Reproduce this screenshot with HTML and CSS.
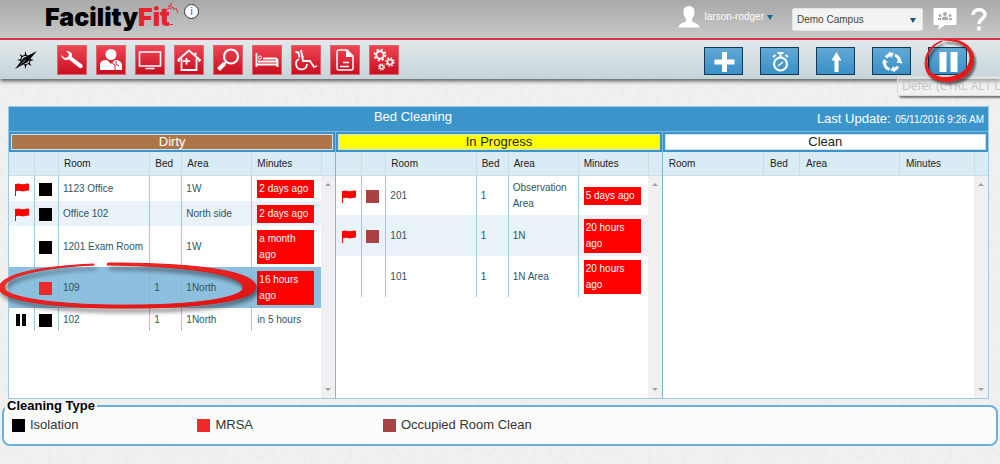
FILE: index.html
```html
<!DOCTYPE html>
<html lang="en">
<head>
<meta charset="utf-8">
<title>FacilityFit - Bed Cleaning</title>
<link rel="stylesheet" href="styles.css">
</head>
<body>
<svg class="sprite" aria-hidden="true">
  <defs>
    <linearGradient id="inkred" x1="0" y1="0" x2="1" y2="1"><stop offset="0" stop-color="#f2352f"/><stop offset="1" stop-color="#e00f10"/></linearGradient>
    <symbol id="flag" viewBox="0 0 14 13"><path d="M0.500 1v12M1 1.500c3-1.500 5 1 8 0.200 2-.5 3-.9 4.500-.7v6.200c-2-.4-3 .6-5 .7-3 .1-4-1.500-7.500-.3z" fill="#f00" stroke="#f00"/></symbol>
  </defs>
</svg>
<header class="topbar">
  <div class="brand">
    <a class="logo" href="#"><span>Facility</span><span class="logo-fit">Fit</span></a>
    <svg class="spark" viewBox="0 0 12 26"><path d="M0 9l3-1-2-2 4 0-2-2 2-1M3 9l3-2 1 3 2-2 2 5" fill="none" stroke="#e23240" stroke-width="1"/><path d="M3 24.500h3" stroke="#e23240"/></svg>
    <button class="info" aria-label="Information">i</button>
  </div>
  <div class="account">
    <svg class="avatar" viewBox="0 0 22 22"><path d="M11 0c4 0 6 3 5.500 7-.3 3-1.500 4.500-2.500 6v2c1 2 7 2 7.500 6.500H.5C1 17 7 17 8 15v-2c-1-1.500-2.200-3-2.500-6C5 3 7 0 11 0z" fill="#fff"/></svg>
    <button class="user">larson-rodger <svg viewBox="0 0 6 5"><path d="M0 0h6L3 5z" fill="#17698a"/></svg></button>
    <div class="campus">
      <select aria-label="Campus"><option>Demo Campus</option></select>
      <svg viewBox="0 0 6 5"><path d="M0 0h6L3 5z" fill="#17587a"/></svg>
    </div>
    <button class="plain" aria-label="Chat"><svg width="24" height="22" viewBox="0 0 24 22"><path d="M1.500 0h21a1 1 0 0 1 1 1v15a1 1 0 0 1-1 1H12l-7 5 1-5H1.500a1 1 0 0 1-1-1V1a1 1 0 0 1 1-1z" fill="#fff"/><g fill="#aaa"><circle cx="12" cy="6" r="2"/><circle cx="7" cy="7.500" r="1.500"/><circle cx="17" cy="7.500" r="1.500"/><path d="M9 12V9.500q3-2 6 0V12zM5 12v-2h3v2zM16 12v-2h3v2z"/></g></svg></button>
    <button class="plain help" aria-label="Help"><svg width="16" height="23" viewBox="0 0 16 23"><path d="M2 7c0-7 12-7 12-.5C14 11 8 11 8 16M8 18.500v4" fill="none" stroke="#fff" stroke-width="3.500"/></svg></button>
  </div>
</header>

<nav class="toolbar" aria-label="Tools">
  <svg class="compass" viewBox="0 0 24 22"><path d="M11.500 2l1 4h-2zM11.500 20l1-4h-2zM3 11l4-1v2zM20 11l-4-1v2zM5.500 5l3.500 2-1.500 1.500zM17.500 17L14 15l1.500-1.500zM17.500 5L14 7l1.500 1.500zM5.500 17L9 15l-1.500-1.500z"/><circle cx="11.500" cy="11" r="4.500" fill="none" stroke="#000" stroke-width="1.200"/><path d="M23 2l-9.500 11L1 20l8.500-11z"/><path d="M4 18l6.500-8 1.500 1.500z" fill="#4a5254"/></svg>
  <div class="modules">
    <button aria-label="Work orders"><svg viewBox="0 0 30 30"><path d="M4 10c1 4 4 6 8 4.500l10 8c3 2 5-1 3-3L15 12c1-4-2-6-6-6l3 3-1 3-3 1z" fill="#fff"/></svg></button>
    <button aria-label="Staff"><svg viewBox="0 0 30 30"><g fill="#fff"><circle cx="15" cy="9.500" r="5.500"/><path d="M4 25v-5c0-4 3-5 7-5l4 4 4-4c4 0 7 2 7 5v5z"/></g><path d="M12 15l7 5v5M20 16v3l3 2" fill="none" stroke="#da2637" stroke-width="1"/></svg></button>
    <button aria-label="Monitor"><svg viewBox="0 0 30 30"><path d="M4.500 7h21v14h-21z" fill="none" stroke="#fff" stroke-width="1.600"/><path d="M10.500 23.500h9" stroke="#fff" stroke-width="1.500"/></svg></button>
    <button aria-label="Facility"><svg viewBox="0 0 30 30"><path d="M4 15L15 5.500 26 15l-1.500 1.500M4 15l1.500 1.500M21.500 11V7.500M7.500 13.500V25h15V13.500M12.500 13v6.500M9 16.200h7" fill="none" stroke="#fff" stroke-width="1.800"/></svg></button>
    <button aria-label="Search"><svg viewBox="0 0 30 30"><g fill="none" stroke="#fff"><circle cx="18" cy="11.500" r="7" stroke-width="2.200"/><path d="M13.500 16.500l-2.500 2.500" stroke-width="2"/><path d="M11.500 18.500l-6 6" stroke-width="4"/></g></svg></button>
    <button aria-label="Beds"><svg viewBox="0 0 30 30"><g fill="none" stroke="#fff"><path d="M4.500 8v14M4 19.500h21.500M25.500 15v7" stroke-width="1.800"/><circle cx="8" cy="12.500" r="1.600"/><path d="M6 16.500h20" stroke-width="2"/><path d="M11 13.500h13l2 2" stroke-width="2"/></g></svg></button>
    <button aria-label="Transport"><svg viewBox="0 0 30 30"><g fill="none" stroke="#fff" stroke-width="1.800"><path d="M4.500 7l3 .5 1 5M10 5l2 11h7l4 6 3-1M12 12.500l-1-3"/><path d="M8 14a5.500 5.500 0 1 0 8 5"/></g></svg></button>
    <button aria-label="Documents"><svg viewBox="0 0 30 30"><path d="M9 5h8l6 6v12a2 2 0 0 1-2 2H9a2 2 0 0 1-2-2V7a2 2 0 0 1 2-2zM13 17.500h6M10 21.500h9" fill="none" stroke="#fff" stroke-width="1.500"/><path d="M16 5l7 7h-7z" fill="#fff"/></svg></button>
    <button aria-label="Settings"><svg viewBox="0 0 30 30"><g fill="none" stroke="#fff"><circle cx="11" cy="10" r="3.700" stroke-width="2"/><circle cx="11" cy="10" r="5.500" stroke-width="1.800" stroke-dasharray="2.200 2.120"/><circle cx="21" cy="17" r="2.500" stroke-width="1.500"/><circle cx="21" cy="17" r="4" stroke-width="1.400" stroke-dasharray="1.600 1.540"/><circle cx="12.500" cy="22" r="1.800" stroke-width="1.300"/><circle cx="12.500" cy="22" r="3" stroke-width="1.200" stroke-dasharray="1.200 1.150"/></g></svg></button>
  </div>
  <div class="actions">
    <button aria-label="Add"><svg viewBox="0 0 37 26"><path d="M19.500 4v20M9.500 14h20" stroke="#fff" stroke-width="5"/></svg></button>
    <button aria-label="Timer"><svg viewBox="0 0 37 26"><g fill="none" stroke="#fff"><circle cx="19.500" cy="16" r="6.500" stroke-width="2.200"/><path d="M19.500 9V5" stroke-width="2"/><path d="M16.500 5h6M12 9l2.500-2M27 9l-2.500-2" stroke-width="2"/><path d="M17 18l5-4" stroke-width="1.500"/></g></svg></button>
    <button aria-label="Move up"><svg viewBox="0 0 37 26"><path d="M19.500 4l5 8.500h-3V24h-4V12.500h-3z" fill="#fff"/></svg></button>
    <button aria-label="Cycle"><svg viewBox="0 0 37 26"><g fill="none" stroke="#fff" stroke-width="3"><path d="M16.500 21.500a7.500 7.500 0 0 1-5-7"/><path d="M13 9.500a8 8 0 0 1 4-3"/><path d="M22 7a7.500 7.500 0 0 1 4.500 7"/><path d="M25 18.500a8 8 0 0 1-4.500 3.500"/></g><path d="M15.500 4l5.500 1-3 5zM23.500 14.500l3.500-5 2.500 6zM22 24l-5-2 4-4zM9 15l2-4 4 3.500z" fill="#fff"/></svg></button>
    <div class="defer">
      <button aria-label="Defer"><svg viewBox="0 0 37 26"><path d="M10.500 4h7v20h-7zM21.500 4h7v20h-7z" fill="#fff"/></svg></button>
      <div class="tip" role="tooltip">Defer (CTRL ALT D)</div>
      <svg class="ring" viewBox="0 0 56 50"><path d="M20 3C4 8-1 24 4 35c6 11 24 13 37 6 13-8 15-24 5-33C40 3 31 1 21 2c10 0 20 2 25 9 6 9 2 21-7 26-12 7-27 5-33-3C1 24 5 9 20 3z" fill="url(#inkred)" stroke="#ee1b1a" stroke-width="1.200"/></svg>
    </div>
  </div>
</nav>

<main>
  <section class="board">
    <div class="board-title"><h1>Bed Cleaning</h1><p>Last Update: <time>05/11/2016 9:26 AM</time></p></div>
    <div class="columns">
      <section class="column">
        <h2 class="dirty">Dirty</h2>
        <div class="list">
          <table>
            <colgroup><col class="c-flag"><col class="c-type"><col><col class="c-bed"><col class="c-area"><col class="c-min"><col class="c-bar"></colgroup>
            <thead><tr><th></th><th></th><th>Room</th><th>Bed</th><th>Area</th><th>Minutes</th><th></th></tr></thead>
            <tbody>
              <tr><td><svg class="flag"><use href="#flag"/></svg></td><td><i class="sq iso"></i></td><td>1123 Office</td><td></td><td>1W</td><td><span class="late">2 days ago</span></td><td></td></tr>
              <tr><td><svg class="flag"><use href="#flag"/></svg></td><td><i class="sq iso"></i></td><td>Office 102</td><td></td><td>North side</td><td><span class="late">2 days ago</span></td><td></td></tr>
              <tr><td></td><td><i class="sq iso"></i></td><td>1201 Exam Room</td><td></td><td>1W</td><td><span class="late">a month ago</span></td><td></td></tr>
              <tr class="selected"><td></td><td><i class="sq mrsa"></i></td><td>109</td><td>1</td><td>1North</td><td><span class="late">16 hours ago</span></td><td></td></tr>
              <tr><td><svg class="paused" viewBox="0 0 11 12"><path d="M0 0h4v12H0zM6 0h4v12H6z"/></svg></td><td><i class="sq iso"></i></td><td>102</td><td>1</td><td>1North</td><td>in 5 hours</td><td></td></tr>
            </tbody>
          </table>
          <div class="bar"><svg viewBox="0 0 6 4"><path d="M0 4l3-3 3 3z"/></svg><svg viewBox="0 0 6 4"><path d="M0 0l3 3 3-3z"/></svg></div>
          <svg class="mark" viewBox="0 0 262 52"><path d="M97 4C50 6 3 13 2 28c0 13 60 21 135 20 70 0 122-8 122-21C259 12 205 3 111 3l-1 2c75 1 134 8 136 22 2 11-50 18-109 18C70 46 10 39 7 28 7 15 50 7 97 5z" fill="url(#inkred)" stroke="#e81414"/></svg>
        </div>
      </section>
      <section class="column">
        <h2 class="progress">In Progress</h2>
        <div class="list">
          <table>
            <colgroup><col class="c-flag"><col class="c-type"><col><col class="c-bed"><col class="c-area"><col class="c-min"><col class="c-bar"></colgroup>
            <thead><tr><th></th><th></th><th>Room</th><th>Bed</th><th>Area</th><th>Minutes</th><th></th></tr></thead>
            <tbody>
              <tr><td><svg class="flag"><use href="#flag"/></svg></td><td><i class="sq occ"></i></td><td>201</td><td>1</td><td>Observation Area</td><td><span class="late">5 days ago</span></td><td></td></tr>
              <tr><td><svg class="flag"><use href="#flag"/></svg></td><td><i class="sq occ"></i></td><td>101</td><td>1</td><td>1N</td><td><span class="late">20 hours ago</span></td><td></td></tr>
              <tr><td></td><td></td><td>101</td><td>1</td><td>1N Area</td><td><span class="late">20 hours ago</span></td><td></td></tr>
            </tbody>
          </table>
          <div class="bar"><svg viewBox="0 0 6 4"><path d="M0 4l3-3 3 3z"/></svg><svg viewBox="0 0 6 4"><path d="M0 0l3 3 3-3z"/></svg></div>
        </div>
      </section>
      <section class="column">
        <h2 class="clean">Clean</h2>
        <div class="list">
          <table class="wide">
            <colgroup><col><col class="w-bed"><col class="w-area"><col class="w-min"><col class="c-bar"></colgroup>
            <thead><tr><th>Room</th><th>Bed</th><th>Area</th><th>Minutes</th><th></th></tr></thead>
            <tbody></tbody>
          </table>
          <div class="bar"><svg viewBox="0 0 6 4"><path d="M0 4l3-3 3 3z"/></svg><svg viewBox="0 0 6 4"><path d="M0 0l3 3 3-3z"/></svg></div>
        </div>
      </section>
    </div>
  </section>
  <fieldset class="types">
    <legend>Cleaning Type</legend>
    <ul>
      <li><i class="sq iso"></i>Isolation</li>
      <li><i class="sq mrsa"></i>MRSA</li>
      <li><i class="sq occ"></i>Occupied Room Clean</li>
    </ul>
  </fieldset>
</main>
</body>
</html>
```
FILE: styles.css
```css
* { box-sizing: border-box; }
body {
  margin: 0;
  overflow-x: hidden;
  font: 10px/16px "Liberation Sans", Arial, sans-serif;
  color: #2d5564;
  background: #f2f2f2 url("data:image/svg+xml,%3Csvg xmlns='http://www.w3.org/2000/svg' width='300' height='300'%3E%3Cfilter id='n'%3E%3CfeTurbulence type='fractalNoise' baseFrequency='.25' numOctaves='3' stitchTiles='stitch'/%3E%3CfeColorMatrix values='0 0 0 0 .5 0 0 0 0 .5 0 0 0 0 .5 .2 0 0 0 -.05'/%3E%3C/filter%3E%3Crect width='300' height='300' filter='url(%23n)'/%3E%3C/svg%3E");
}
button { margin: 0; padding: 0; border: 0; background: none; font: inherit; color: inherit; cursor: pointer; }
svg { display: block; }
.sprite { position: absolute; width: 0; height: 0; }

.topbar {
  display: flex;
  justify-content: space-between;
  height: 40px;
  padding: 0 13px 0 45px;
  background: linear-gradient(#a9a9a9, #c8c8c8);
  border-bottom: 2px solid #e8304f;
}
.brand { display: flex; align-items: flex-start; }
.logo { font: 900 25px/34px Inter, sans-serif; color: #000; text-decoration: none; }
.logo-fit { color: #e8212f; }
.spark { width: 12px; height: 26px; margin-left: -3px; }
.info {
  width: 15px; height: 15px; margin: 4px 0 0 5px;
  border: 1px solid #333; border-radius: 50%; background: #fff;
  font-size: 10px; line-height: 13px; color: #33f;
}
.account { display: flex; align-items: center; }
.avatar { width: 22px; height: 22px; margin: 0 5px 4px 0; }
.user { display: flex; align-items: center; gap: 3px; color: #fff; padding-bottom: 4px; }
.user svg, .campus svg { width: 6px; height: 5px; }
.campus { position: relative; width: 131px; margin-left: 19px; }
.campus select {
  appearance: none; width: 100%; height: 23px; padding: 0 4px;
  border: 1px solid #e4e4e4; border-radius: 2px; background: #f3f3f3;
  font: 10px "Liberation Sans", Arial, sans-serif; color: #444;
}
.campus svg { position: absolute; right: 7px; top: 10px; pointer-events: none; }
.plain { margin-left: 10px; }
.help { margin-left: 14px; }

.toolbar {
  display: flex;
  align-items: center;
  height: 39px;
  padding: 0 33px 0 14px;
  background: linear-gradient(#e1e9eb, #c6d4d9);
  box-shadow: 0 2px 4px #555;
}
.compass { width: 24px; height: 22px; margin-right: 19px; }
.modules { display: flex; gap: 9px; }
.modules button { width: 30px; height: 30px; border: 1px solid #e0646c; background: linear-gradient(#ee4553, #c80f20); }
.modules svg { margin: -1px; }
.actions { display: flex; gap: 17px; margin-left: auto; padding-top: 3px; }
.actions button { display: block; width: 39px; height: 28px; border: 1px solid #17384f; background: linear-gradient(#62a8d4, #3890c8); }
.defer { position: relative; }
.ring { position: absolute; left: -6px; top: -9px; width: 56px; height: 48px; filter: drop-shadow(2px 3px 1px #0008); }
.tip {
  position: absolute; left: -31px; top: 29px;
  padding: 0 4px; border: 1px solid #ddd; border-radius: 3px;
  background: #f2f2f266; box-shadow: 2px 2px 2px #777;
  font: 12px/18px "Open Sans", sans-serif; color: #c4c4c4; white-space: nowrap;
}

main { padding: 27px 2px 20px; }
.board { margin: 0 9px 0 6px; border: 1px solid #9ccbe2; background: #3c95ca; }
.board-title { display: flex; height: 24px; color: #fff; padding-right: 4px; }
.board-title h1 { flex: 1; margin: 0; font: 13px/20px "Liberation Sans", Arial, sans-serif; text-align: center; }
.board-title p { margin: 0; font-size: 13px; line-height: 23px; }
.board-title time { font-size: 10px; margin-left: 1px; }
.columns { display: grid; grid-template-columns: 1fr 1fr 1fr; border-top: 1px solid #7fbcdf; }
.column { display: flex; flex-direction: column; min-width: 0; }
.column + .column { border-left: 1px solid #7db7d0; }
.column h2 { margin: 2px; height: 16px; border: 1px solid #cfe2ea; font: 13px/14px "Liberation Sans", Arial, sans-serif; text-align: center; color: #222; }
.column h2.dirty { background: #ad7548; color: #fff; }
.column h2.progress { background: #ff0; }
.column h2.clean { background: #fff; }
.list { position: relative; min-height: 246px; background: #fff; }
table { width: 100%; table-layout: fixed; border-collapse: separate; border-spacing: 0; }
.c-flag { width: 25px; }
.c-type { width: 24px; }
.c-bed { width: 32px; }
.c-area, .c-min { width: 70px; }
.c-bar { width: 14px; }
.w-bed { width: 36px; }
.w-area { width: 100px; }
.w-min { width: 75px; }
th { height: 24px; padding: 0 0 0 5px; background: #d9ebf4; border-bottom: 1px solid #d3dbe2; font-weight: normal; text-align: left; color: #222; }
th + th { border-left: 1px solid #d3dbe2; }
.wide th { padding-left: 6px; }
td { padding: 4px 0 3px 6px; vertical-align: middle; }
td + td { border-left: 1px solid #a3c8d9; padding-left: 4px; }
td:nth-child(6) { padding-left: 5px; padding-right: 7px; }
td:nth-child(7) { border: 0; }
tbody tr:nth-child(even) { background: #e8f2f8; }
tbody tr.selected { background: #8dbfde; }
.selected td { border-color: #86b9d8; }
.late { display: block; padding: 1px 2px; background: #f00; color: #fff; }
.flag { width: 14px; height: 13px; }
.paused { width: 11px; height: 12px; margin-left: 1px; }
.sq { display: block; flex: none; width: 13px; height: 13px; }
.iso { background: #000; }
.mrsa { background: #ee2a2a; }
.occ { background: #a94343; }
.bar {
  position: absolute; right: 0; top: 24px; bottom: 0; width: 14px;
  display: flex; flex-direction: column; align-items: center; justify-content: space-between;
  padding: 6px 0; background: #f0f0f0;
}
.bar svg { width: 6px; height: 4px; fill: #a0a0a0; }
.mark { position: absolute; left: -12px; top: 108px; width: 262px; height: 52px; filter: drop-shadow(2px 4px 2px #0007); }

.types { margin: -1px 0 0; padding: 3px 8px 11px; min-width: 0; border: 2px solid #6bb0d8; border-radius: 8px; background: #fcfcfc; }
.types legend { margin-left: -7px; padding: 0 2px; font-size: 13px; font-weight: bold; line-height: 16px; color: #000; }
.types ul { display: flex; margin: 0; padding: 0; list-style: none; font-size: 13px; color: #333; }
.types li { display: flex; align-items: center; gap: 5px; width: 19%; }
```
